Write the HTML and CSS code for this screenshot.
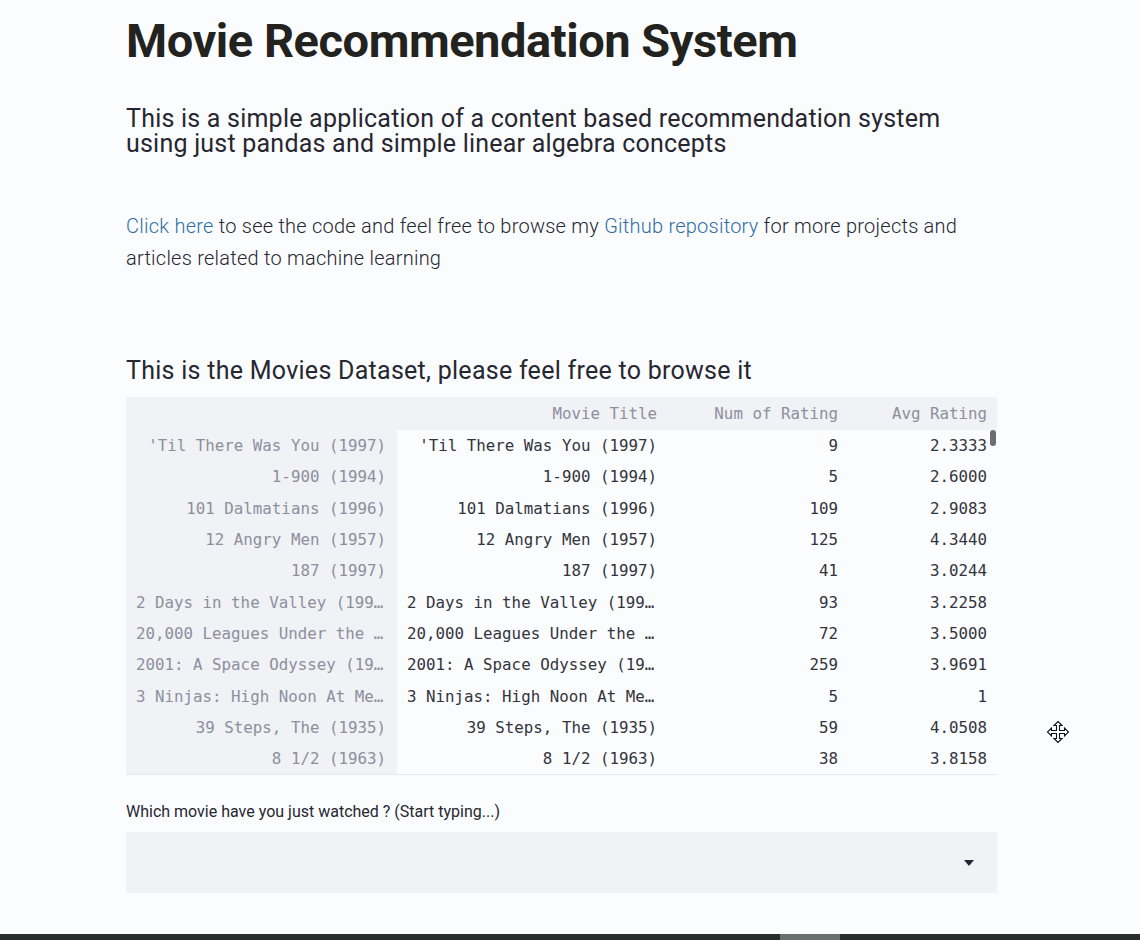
FILE: index.html
```html
<!DOCTYPE html>
<html lang="en">
<head>
<meta charset="utf-8">
<title>Movie Recommendation System</title>
<link rel="stylesheet" href="styles.css">
</head>
<body>
<div class="page">
  <main class="main">
    <h1 class="title">Movie Recommendation System</h1>
    <h3 class="subtitle">This is a simple application of a content based recommendation system using just pandas and simple linear algebra concepts</h3>
    <p class="intro"><a href="#">Click here</a> to see the code and feel free to browse my <a href="#">Github repository</a> for more projects and articles related to machine learning</p>
    <h3 class="section">This is the Movies Dataset, please feel free to browse it</h3>
    <div class="frame">
      <table class="df">
        <colgroup>
          <col class="c-idx"><col class="c-title"><col class="c-num"><col class="c-avg">
        </colgroup>
        <thead>
          <tr><th class="blank"></th><th>Movie Title</th><th>Num of Rating</th><th>Avg Rating</th></tr>
        </thead>
        <tbody>
          <tr><th>'Til There Was You (1997)</th><td>'Til There Was You (1997)</td><td>9</td><td>2.3333</td></tr>
          <tr><th>1-900 (1994)</th><td>1-900 (1994)</td><td>5</td><td>2.6000</td></tr>
          <tr><th>101 Dalmatians (1996)</th><td>101 Dalmatians (1996)</td><td>109</td><td>2.9083</td></tr>
          <tr><th>12 Angry Men (1957)</th><td>12 Angry Men (1957)</td><td>125</td><td>4.3440</td></tr>
          <tr><th>187 (1997)</th><td>187 (1997)</td><td>41</td><td>3.0244</td></tr>
          <tr><th class="cut">2 Days in the Valley (199…</th><td class="cut">2 Days in the Valley (199…</td><td>93</td><td>3.2258</td></tr>
          <tr><th class="cut">20,000 Leagues Under the …</th><td class="cut">20,000 Leagues Under the …</td><td>72</td><td>3.5000</td></tr>
          <tr><th class="cut">2001: A Space Odyssey (19…</th><td class="cut">2001: A Space Odyssey (19…</td><td>259</td><td>3.9691</td></tr>
          <tr><th class="cut">3 Ninjas: High Noon At Me…</th><td class="cut">3 Ninjas: High Noon At Me…</td><td>5</td><td>1</td></tr>
          <tr><th>39 Steps, The (1935)</th><td>39 Steps, The (1935)</td><td>59</td><td>4.0508</td></tr>
          <tr><th>8 1/2 (1963)</th><td>8 1/2 (1963)</td><td>38</td><td>3.8158</td></tr>
        </tbody>
      </table>
      <div class="thumb"></div>
    </div>
    <label class="label">Which movie have you just watched ? (Start typing...)</label>
    <div class="select">
      <svg class="caret" width="10" height="6" viewBox="0 0 10 6"><path d="M0 0H10L5 6Z" fill="#262730"/></svg>
    </div>
  </main>
  <svg class="move-cursor" width="24" height="24" viewBox="0 0 24 24">
    <path d="M12 1.5 L16 5.5 L13.5 5.5 L13.5 10.5 L18.5 10.5 L18.5 8 L22.5 12 L18.5 16 L18.5 13.5 L13.5 13.5 L13.5 18.5 L16 18.5 L12 22.5 L8 18.5 L10.5 18.5 L10.5 13.5 L5.5 13.5 L5.5 16 L1.5 12 L5.5 8 L5.5 10.5 L10.5 10.5 L10.5 5.5 L8 5.5 Z" fill="#fff" stroke="#111" stroke-width="1.1" stroke-linejoin="miter"/>
  </svg>
  <div class="taskbar"><span class="tb-left"></span><span class="tb-mark"></span><span class="tb-right"></span></div>
</div>
</body>
</html>
```

FILE: styles.css
```css
html, body {
  margin: 0;
  padding: 0;
}
body {
  background: #fbfcfe;
  color: #262730;
  font-family: Roboto, "Noto Sans", sans-serif;
}
.page {
  position: relative;
  height: 940px;
  display: flex;
  flex-direction: column;
  overflow: hidden;
}
.main {
  width: 871px;
  margin-left: 126px;
  flex: 1;
}
.title {
  margin: 0;
  padding-top: 12px;
  font-size: 47px;
  font-weight: 700;
  line-height: 58px;
  color: #22231e;
  letter-spacing: -0.45px;
}
.subtitle {
  margin: 36px 0 0;
  font-size: 25px;
  font-weight: 400;
  line-height: 25px;
  color: #262730;
  letter-spacing: 0.22px;
}
.intro {
  margin: 54px 0 0;
  font-size: 20px;
  font-weight: 300;
  line-height: 32px;
  color: #262730;
  letter-spacing: 0.24px;
}
.intro a {
  color: #2e6fa3;
  text-decoration: none;
}
.section {
  margin: 82px 0 0;
  font-size: 25px;
  font-weight: 400;
  line-height: 30px;
  color: #262730;
  letter-spacing: 0.27px;
}
.frame {
  position: relative;
  margin-top: 11px;
  border-bottom: 1px solid #e6e8ef;
}
.df {
  width: 871px;
  table-layout: fixed;
  border-collapse: collapse;
  font-family: "DejaVu Sans Mono", "Liberation Mono", monospace;
  font-size: 15.8px;
}
.c-idx { width: 271px; }
.c-title { width: 271px; }
.c-num { width: 181px; }
.c-avg { width: 148px; }
.df th, .df td {
  height: 31.3px;
  padding: 0 11px 0 10px;
  text-align: right;
  white-space: nowrap;
  overflow: hidden;
  font-weight: 400;
  box-sizing: border-box;
}
.df thead th {
  background: #f0f2f6;
  color: #8d8f9c;
  height: 33px;
}
.df tbody th {
  background: #f0f2f6;
  color: #8d8f9c;
}
.df td {
  color: #33343c;
}
.df td:last-child, .df thead th:last-child {
  padding-right: 10px;
}
.df .cut {
  text-align: left;
}
.thumb {
  position: absolute;
  right: 1px;
  top: 33px;
  width: 6px;
  height: 16px;
  border-radius: 3px;
  background: #6b6d70;
}
.label {
  display: block;
  margin-top: 27px;
  font-size: 16px;
  font-weight: 400;
  line-height: 20px;
  color: #262730;
}
.select {
  margin-top: 10px;
  height: 61px;
  background: #f0f2f6;
  display: flex;
  align-items: center;
  justify-content: flex-end;
  padding-right: 23px;
}
.caret {
  display: block;
}
.move-cursor {
  position: absolute;
  left: 1046px;
  top: 720px;
}
.taskbar {
  height: 6px;
  display: flex;
  background: #2a2e2b;
}
.tb-left { width: 780px; }
.tb-mark { width: 60px; background: #6b706c; }
.tb-right { flex: 1; }
```
